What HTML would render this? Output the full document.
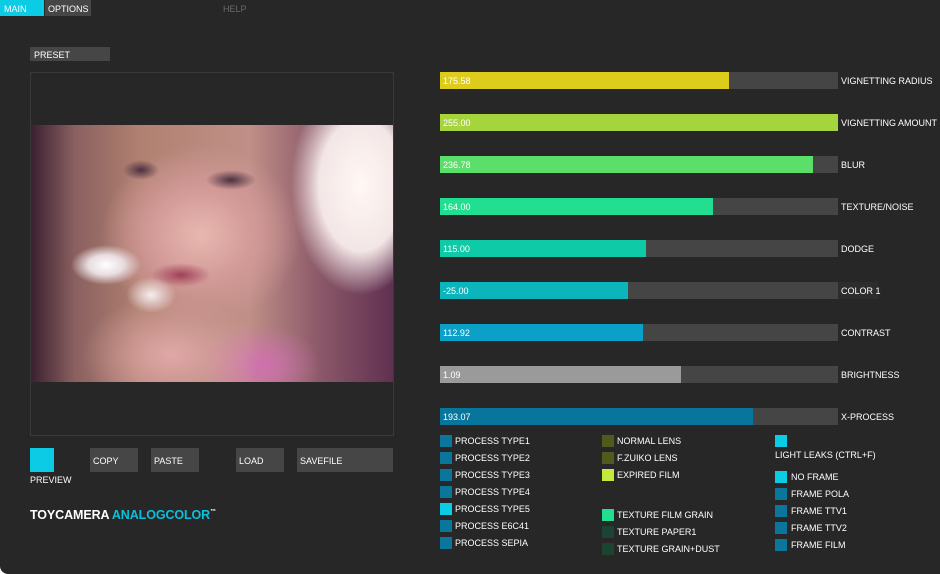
<!DOCTYPE html>
<html><head><style>
*{margin:0;padding:0;box-sizing:border-box}
body{width:940px;height:574px;background:#fff;overflow:hidden;font-family:"Liberation Sans",sans-serif;font-size:9px;color:#fff}
#app{position:absolute;left:0;top:0;width:940px;height:574px;background:#272727;border-radius:0 0 0 8px}
.a{position:absolute}
.t{position:absolute;line-height:10px;white-space:nowrap;font-size:9px}
.bar{position:absolute;left:440px;width:398px;height:17px;background:#454545}
.bar i{position:absolute;left:0;top:0;height:17px}
.bar span{position:absolute;left:3px;top:4px;line-height:10px;font-size:9px}
.lbl{position:absolute;left:841px;line-height:10px;font-size:9px;white-space:nowrap}
.sq{position:absolute;width:12px;height:12px}
.btn{position:absolute;top:448px;height:24px;background:#464646;padding:8px 0 0 3px;line-height:10px}
</style></head><body><div id="app">
<div class="a" style="left:0;top:0;width:44px;height:16px;background:#0ccbe5"></div>
<div class="t" style="left:4px;top:4px">MAIN</div>
<div class="a" style="left:45px;top:0;width:46px;height:16px;background:#464646"></div>
<div class="t" style="left:48px;top:4px">OPTIONS</div>
<div class="t" style="left:223px;top:4px;color:#6a6a6a">HELP</div>
<div class="a" style="left:30px;top:47px;width:80px;height:14px;background:#464646"></div>
<div class="t" style="left:34px;top:50px">PRESET</div>
<div class="a" style="left:30px;top:72px;width:364px;height:364px;border:1px solid #3a3a3a"></div>
<div class="a" style="left:31px;top:125px;width:362px;height:257px;overflow:hidden;background:#b07a78">
 <div class="a" style="left:0;top:0;width:362px;height:257px;background:
 radial-gradient(ellipse 70px 110px at 330px 60px,#fff8f4 0%,#f3e6e6 60%,rgba(240,220,225,0) 100%),
 radial-gradient(ellipse 35px 20px at 75px 140px,#ffffff 0%,#e8dde0 50%,rgba(0,0,0,0) 100%),
 radial-gradient(ellipse 25px 18px at 120px 170px,#f5f0f0 0%,rgba(0,0,0,0) 100%),
 radial-gradient(ellipse 18px 10px at 110px 45px,#4a3040 0%,rgba(0,0,0,0) 100%),
 radial-gradient(ellipse 25px 10px at 200px 55px,#4a3040 0%,rgba(0,0,0,0) 100%),
 radial-gradient(ellipse 30px 12px at 150px 150px,#a04058 0%,rgba(0,0,0,0) 100%),
 radial-gradient(ellipse 100px 90px at 170px 110px,#e8b8b0 0%,#d39a98 50%,rgba(180,120,120,0) 100%),
 radial-gradient(ellipse 90px 60px at 140px 230px,#e0a8a8 0%,rgba(0,0,0,0) 100%),
 radial-gradient(ellipse 60px 40px at 230px 240px,#d070b0 0%,rgba(0,0,0,0) 100%),
 linear-gradient(90deg,#3a2030 0%,#8a6060 12%,#b08070 30%,#c09088 60%,#8a5868 80%,#603050 100%)"></div>
</div>
<div class="a" style="left:30px;top:448px;width:24px;height:24px;background:#0ccbe5"></div>
<div class="t" style="left:30px;top:475px">PREVIEW</div>
<div class="btn" style="left:90px;width:48px">COPY</div>
<div class="btn" style="left:151px;width:48px">PASTE</div>
<div class="btn" style="left:236px;width:48px">LOAD</div>
<div class="btn" style="left:297px;width:96px">SAVEFILE</div>
<div class="t" style="left:30px;top:505px;font-family:'Liberation Sans',sans-serif;font-weight:bold;font-size:12.5px;line-height:14px;letter-spacing:-.1px">TOYCAMERA <span style="color:#0cc0dc">ANALOGCOLOR</span><sup style="font-size:6px;vertical-align:6px">™</sup></div>

<div class="bar" style="top:72px"><i style="width:289px;background:#decc1c"></i><span>175.58</span></div><div class="lbl" style="top:76px">VIGNETTING RADIUS</div>
<div class="bar" style="top:114px"><i style="width:398px;background:#a6d43c"></i><span>255.00</span></div><div class="lbl" style="top:118px">VIGNETTING AMOUNT</div>
<div class="bar" style="top:156px"><i style="width:373px;background:#5cde6a"></i><span>236.78</span></div><div class="lbl" style="top:160px">BLUR</div>
<div class="bar" style="top:198px"><i style="width:273px;background:#22de90"></i><span>164.00</span></div><div class="lbl" style="top:202px">TEXTURE/NOISE</div>
<div class="bar" style="top:240px"><i style="width:206px;background:#0ecaa6"></i><span>115.00</span></div><div class="lbl" style="top:244px">DODGE</div>
<div class="bar" style="top:282px"><i style="width:188px;background:#0cb4bc"></i><span>-25.00</span></div><div class="a" style="left:838px;top:282px;width:40px;height:17px;background:#2d2d2d"></div><div class="lbl" style="top:286px">COLOR 1</div>
<div class="bar" style="top:324px"><i style="width:203px;background:#0aa0c8"></i><span>112.92</span></div><div class="lbl" style="top:328px">CONTRAST</div>
<div class="bar" style="top:366px"><i style="width:241px;background:#9a9a9a"></i><span>1.09</span></div><div class="lbl" style="top:370px">BRIGHTNESS</div>
<div class="bar" style="top:408px"><i style="width:313px;background:#08769c"></i><span>193.07</span></div><div class="lbl" style="top:412px">X-PROCESS</div>

<div class="sq" style="left:440px;top:435px;background:#0a769c"></div><div class="t" style="left:455px;top:436px">PROCESS TYPE1</div>
<div class="sq" style="left:440px;top:452px;background:#0a769c"></div><div class="t" style="left:455px;top:453px">PROCESS TYPE2</div>
<div class="sq" style="left:440px;top:469px;background:#0a769c"></div><div class="t" style="left:455px;top:470px">PROCESS TYPE3</div>
<div class="sq" style="left:440px;top:486px;background:#0a769c"></div><div class="t" style="left:455px;top:487px">PROCESS TYPE4</div>
<div class="sq" style="left:440px;top:503px;background:#0ccbe5"></div><div class="t" style="left:455px;top:504px">PROCESS TYPE5</div>
<div class="sq" style="left:440px;top:520px;background:#0a769c"></div><div class="t" style="left:455px;top:521px">PROCESS E6C41</div>
<div class="sq" style="left:440px;top:537px;background:#0a769c"></div><div class="t" style="left:455px;top:538px">PROCESS SEPIA</div>

<div class="sq" style="left:602px;top:435px;background:#4e5a20"></div><div class="t" style="left:617px;top:436px">NORMAL LENS</div>
<div class="sq" style="left:602px;top:452px;background:#4e5a20"></div><div class="t" style="left:617px;top:453px">F.ZUIKO LENS</div>
<div class="sq" style="left:602px;top:469px;background:#c4e83e"></div><div class="t" style="left:617px;top:470px">EXPIRED FILM</div>
<div class="sq" style="left:602px;top:509px;background:#22de90"></div><div class="t" style="left:617px;top:510px">TEXTURE FILM GRAIN</div>
<div class="sq" style="left:602px;top:526px;background:#1c4432"></div><div class="t" style="left:617px;top:527px">TEXTURE PAPER1</div>
<div class="sq" style="left:602px;top:543px;background:#1c4432"></div><div class="t" style="left:617px;top:544px">TEXTURE GRAIN+DUST</div>

<div class="sq" style="left:775px;top:435px;background:#0ccbe5"></div>
<div class="t" style="left:775px;top:450px">LIGHT LEAKS (CTRL+F)</div>
<div class="sq" style="left:775px;top:471px;background:#0ccbe5"></div><div class="t" style="left:791px;top:472px">NO FRAME</div>
<div class="sq" style="left:775px;top:488px;background:#0a769c"></div><div class="t" style="left:791px;top:489px">FRAME POLA</div>
<div class="sq" style="left:775px;top:505px;background:#0a769c"></div><div class="t" style="left:791px;top:506px">FRAME TTV1</div>
<div class="sq" style="left:775px;top:522px;background:#0a769c"></div><div class="t" style="left:791px;top:523px">FRAME TTV2</div>
<div class="sq" style="left:775px;top:539px;background:#0a769c"></div><div class="t" style="left:791px;top:540px">FRAME FILM</div>
</div></body></html>
